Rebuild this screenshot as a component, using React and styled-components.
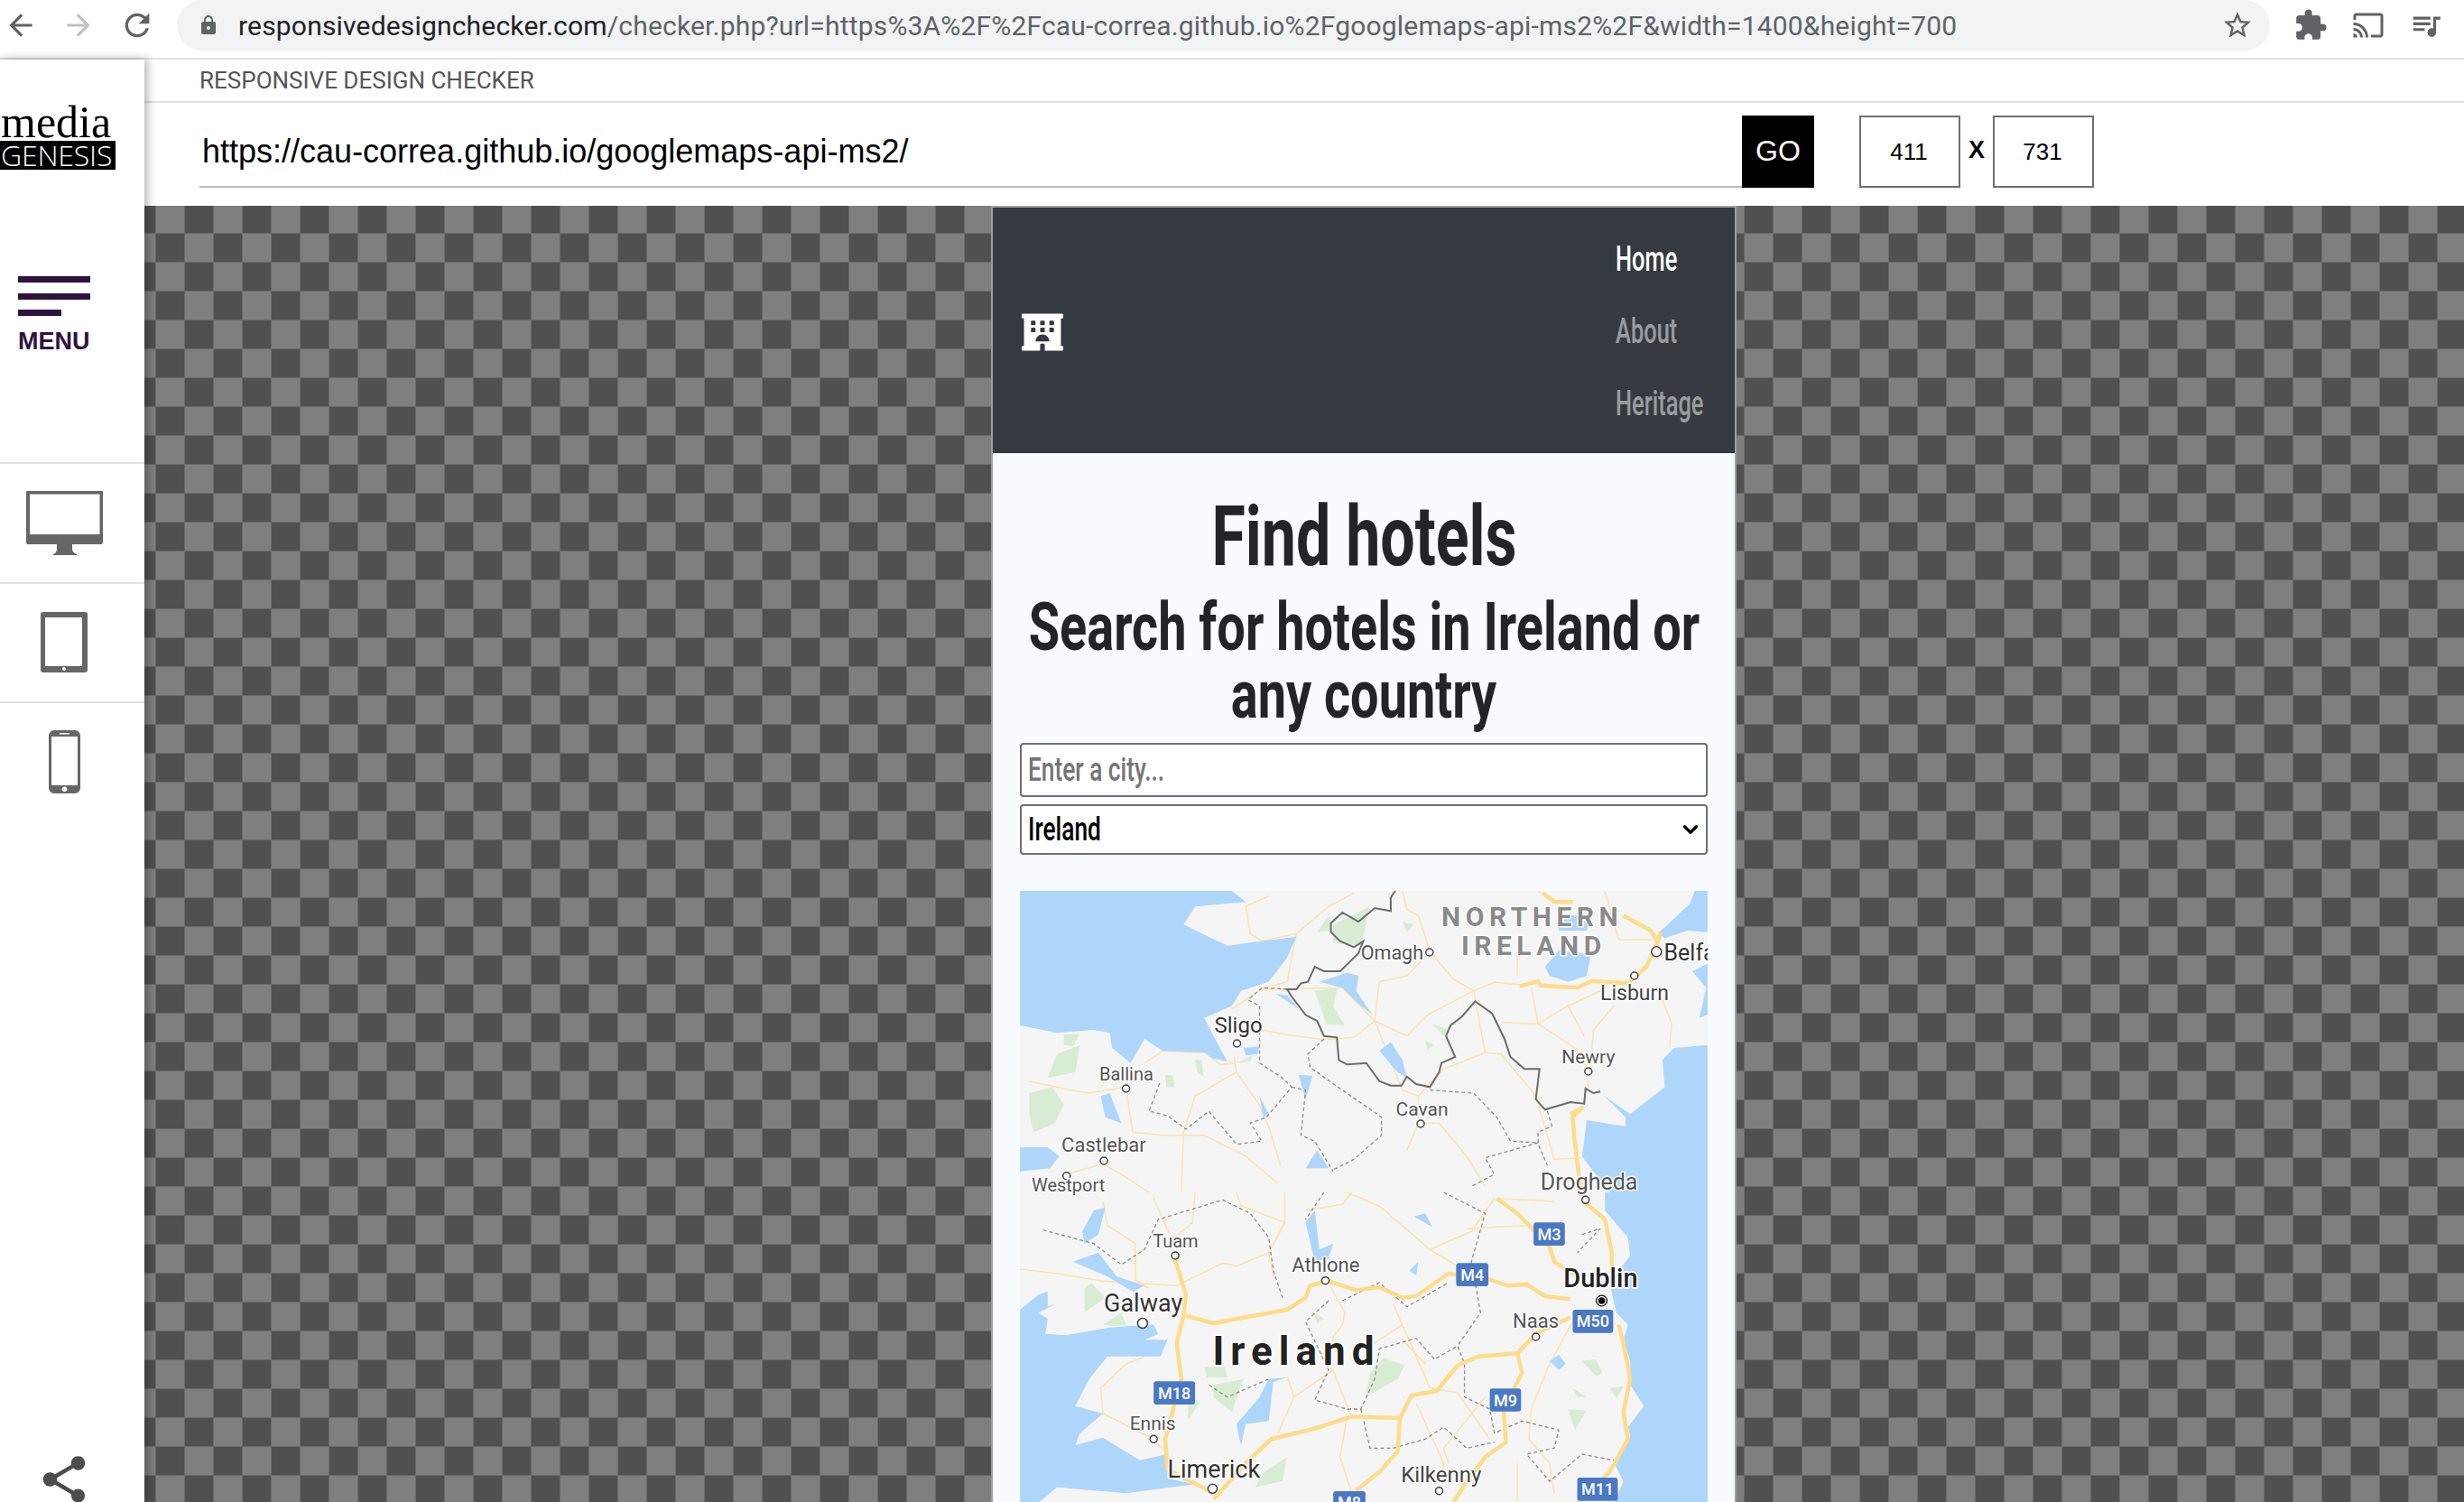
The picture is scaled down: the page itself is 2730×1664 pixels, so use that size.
import React from 'react'
import styled, { createGlobalStyle } from 'styled-components'
import { MdArrowBack, MdArrowForward, MdRefresh, MdLock, MdStarBorder, MdExtension, MdCast, MdQueueMusic, MdShare } from 'react-icons/md'
import { FaHotel } from 'react-icons/fa'
import { ChevronDown } from 'lucide-react'

const Global = createGlobalStyle`
  html, body { margin: 0; padding: 0; background: #fff; }
  body { font-family: "Liberation Sans", Arial, sans-serif; }
`

const Page = styled.div`
  width: 2730px;
  height: 1664px;
  overflow: hidden;
  display: flex;
  flex-direction: column;
`

/* browser toolbar */
const Toolbar = styled.header`
  height: 64px;
  flex: none;
  display: flex;
  align-items: flex-start;
  padding-left: 4px;
  border-bottom: 2px solid #dfe1e5;
  color: #5f6368;
`
const NavIcon = styled.span`
  display: flex;
  margin-top: ${p => p.$top || 9}px;
  margin-right: ${p => p.$gap || 26}px;
  color: ${p => p.$muted ? '#bdc1c6' : '#5f6368'};
`
const Omnibox = styled.div`
  width: 2319px;
  height: 56px;
  margin-left: -2px;
  flex: none;
  display: flex;
  align-items: center;
  padding: 0 18px 0 23px;
  box-sizing: border-box;
  background: #f1f3f4;
  border-radius: 28px;
`
const AddressText = styled.div`
  flex: 1;
  margin-left: 21px;
  font: 400 30px "Roboto", sans-serif;
  letter-spacing: .18px;
  color: #5f6368;
  white-space: nowrap;
  b { font-weight: 400; color: #202124; }
`
const ToolbarRight = styled.div`
  display: flex;
  margin-left: 26px;
`

/* app body */
const Body = styled.div`
  flex: 1;
  display: flex;
  min-height: 0;
`
const Sidebar = styled.aside`
  position: relative;
  z-index: 2;
  width: 160px;
  flex: none;
  display: flex;
  flex-direction: column;
  background: #fff;
  box-shadow: 3px 0 10px rgba(0, 0, 0, .32);
`
const Logo = styled.div`
  height: 184px;
  padding-top: 50px;
  box-sizing: border-box;
  flex: none;
`
const LogoWord = styled.div`
  font: 400 50px/38px "Liberation Serif", serif;
  padding-left: 1px;
  color: #000;
`
const LogoBar = styled.div`
  width: 128px;
  height: 32px;
  margin-top: 2px;
  background: #000;
  color: #fff;
  overflow: hidden;
  font: 300 32px/32px "Open Sans", sans-serif;
  letter-spacing: -.2px;
  padding-left: 1px;
  box-sizing: border-box;
`
const MenuBlock = styled.div`
  height: 262px;
  padding: 56px 0 0 20px;
  box-sizing: border-box;
  flex: none;
`
const MenuLine = styled.div`
  width: ${p => p.$short ? 48 : 80}px;
  height: 7px;
  margin-bottom: 11.5px;
  background: #2e1240;
`
const MenuLabel = styled.div`
  margin-top: 15px;
  font: 700 27px/27px "Liberation Sans", sans-serif;
  color: #2e1240;
`
const DeviceRow = styled.div`
  height: 130.5px;
  flex: none;
  border-top: 2px solid #e0e0e0;
  display: flex;
  align-items: center;
  justify-content: center;
  padding-right: 18px;
  box-sizing: content-box;
  color: #666;
  &:last-of-type { border-bottom: 2px solid #e0e0e0; }
`
const ShareButton = styled.div`
  margin-top: auto;
  padding: 0 0 0 40px;
  display: flex;
  height: 56px;
  color: #4d4d4d;
  svg { flex: none; }
`

const Main = styled.main`
  flex: 1;
  min-width: 0;
  display: flex;
  flex-direction: column;
`
const TitleBar = styled.div`
  height: 46px;
  flex: none;
  display: flex;
  align-items: center;
  padding-left: 61px;
  border-bottom: 2px solid #e0e0e0;
  font: 400 26px "Roboto", sans-serif;
  color: #555;
`
const UrlRow = styled.div`
  height: 114px;
  flex: none;
  padding: 14px 0 20px 61px;
  box-sizing: border-box;
  display: flex;
  align-items: stretch;
`
const UrlField = styled.div`
  width: 1709px;
  box-sizing: border-box;
  padding: 2px 0 0 3px;
  display: flex;
  align-items: center;
  border-bottom: 2px solid #bbb;
  font: 400 36px "Liberation Sans", sans-serif;
  color: #000;
`
const GoButton = styled.div`
  width: 80px;
  display: flex;
  align-items: center;
  justify-content: center;
  padding-bottom: 2px;
  box-sizing: border-box;
  background: #000;
  color: #fff;
  font: 400 32px "Liberation Sans", sans-serif;
`
const SizeBox = styled.div`
  width: 112px;
  margin-left: ${p => p.$first ? 50 : 0}px;
  box-sizing: border-box;
  border: 2px solid #707070;
  display: flex;
  align-items: center;
  justify-content: center;
  padding-right: 2px;
  font: 400 26px "Liberation Sans", sans-serif;
  color: #000;
`
const Times = styled.div`
  width: 36px;
  display: flex;
  align-items: center;
  justify-content: center;
  padding-bottom: 4px;
  font: 700 27px "Liberation Sans", sans-serif;
`
const Stage = styled.div`
  flex: 1;
  min-height: 0;
  padding-left: 938px;
  background-color: #505050;
  background-image:
    linear-gradient(90deg, #6a6a6a 1px, transparent 1px),
    linear-gradient(#6a6a6a 1px, transparent 1px),
    conic-gradient(#7f7f7f 25%, #505050 0 50%, #7f7f7f 0 75%, #505050 0);
  background-size: 32px 32px, 32px 32px, 64px 64px;
  background-position: 12px 30px;
`

/* the page inside the preview */
const Frame = styled.div`
  width: 826px;
  height: 100%;
  box-sizing: border-box;
  border: 2px solid #a0a0a0;
  border-bottom: none;
  background: #f8fbff;
  overflow: hidden;
`
const Navbar = styled.nav`
  height: 272px;
  display: flex;
  justify-content: space-between;
  align-items: center;
  padding: 2px 0 0 32px;
  box-sizing: border-box;
  background: #343a40;
  color: #fff;
  > svg { margin-top: 2px; }
`
const NavList = styled.ul`
  list-style: none;
  margin: 0;
  padding: 0;
  width: 132px;
  display: flex;
  flex-direction: column;
  gap: 40px;
`
const NavItem = styled.li`
  height: 40px;
  color: ${p => p.$active ? '#fff' : 'rgba(255,255,255,.5)'};
  font: 500 38px/40px "Roboto", sans-serif;
  span { display: inline-block; transform: scaleX(.67); transform-origin: left center; white-space: nowrap; }
`
const Content = styled.section`
  padding: 0 30px;
`
const Heading = styled.div`
  display: flex;
  justify-content: center;
  white-space: nowrap;
  color: #212529;
  font-family: "Roboto", sans-serif;
  font-weight: 700;
  font-size: ${p => p.$size}px;
  line-height: ${p => p.$line}px;
  margin-top: ${p => p.$top || 0}px;
  span { display: inline-block; transform: scaleX(${p => p.$squeeze}); }
`
const FieldBox = styled.div`
  height: ${p => p.$height}px;
  margin-top: ${p => p.$top}px;
  box-sizing: border-box;
  display: flex;
  align-items: center;
  justify-content: space-between;
  padding: 0 7px;
  background: #fff;
  border: 2px solid #6f6f6f;
  border-radius: 4px;
  color: ${p => p.$placeholder ? '#757575' : '#000'};
  font: 500 36px "Roboto", sans-serif;
  span { display: inline-block; transform: scaleX(.73); transform-origin: left center; white-space: nowrap; }
  svg { color: #000; margin-right: -3px; }
`
const MapBox = styled.div`
  height: 678px;
  margin-top: 40px;
  overflow: hidden;
  background: #aed6fb;
  svg { display: block; }
`

/* map data, written in the reference crop coordinates */
const A = (x, y) => [x / 1.96 - 10, y / 3 - 6]
const B = (x, y) => [x / 1.96 - 10, y / 3 + 334]
const pts = (zone, list) => {
  const out = []
  for (let i = 0; i < list.length; i += 2) out.push(zone(list[i], list[i + 1]).map(n => n.toFixed(1)).join(','))
  return out.join(' ')
}

const landHoles = [
  [A, [20, 18, 480, 18, 510, 55, 400, 70, 375, 130, 470, 200, 520, 190, 570, 180, 620, 170, 600, 240, 560, 320, 500, 350, 480, 400, 420, 440, 440, 500, 470, 585, 440, 575, 420, 555, 330, 550, 290, 510, 260, 590, 220, 540, 215, 490, 180, 480, 100, 490, 20, 465]],
  [A, [1513, 18, 1485, 18, 1475, 60, 1440, 110, 1405, 160, 1420, 175, 1470, 150, 1513, 155]],
  [A, [1513, 260, 1480, 285, 1510, 340, 1495, 440, 1513, 430]],
  [A, [1513, 530, 1440, 540, 1415, 580, 1420, 670, 1345, 760, 1285, 695, 1335, 770, 1335, 800, 1250, 780, 1245, 850, 1240, 900, 1280, 980, 1300, 1020, 1513, 1020]],
  [A, [20, 870, 80, 870, 105, 900, 85, 940, 20, 950]],
  [A, [1160, 270, 1190, 215, 1260, 230, 1250, 300, 1210, 320, 1170, 300]],
  [A, [1190, 90, 1260, 110, 1250, 150, 1190, 150]],
  [A, [670, 320, 730, 290, 755, 300, 750, 350, 785, 430, 760, 400, 720, 340]],
  [A, [575, 360, 600, 365, 625, 410, 600, 385]],
  [A, [800, 550, 825, 520, 850, 580, 860, 640, 840, 620]],
  [A, [195, 700, 215, 690, 240, 790, 205, 770]],
  [A, [625, 630, 655, 632, 640, 710]],
  [A, [540, 700, 560, 760, 548, 770]],
  [A, [505, 540, 540, 535, 535, 560, 510, 565]],
  [A, [640, 940, 665, 880, 690, 940]],
  [B, [1290, 0, 1290, 60, 1340, 150, 1345, 210, 1300, 300, 1315, 400, 1340, 440, 1330, 490, 1345, 560, 1345, 640, 1375, 710, 1340, 780, 1345, 810, 1310, 900, 1330, 960, 1310, 1032, 1513, 1032, 1513, 0]],
  [B, [20, 390, 60, 340, 80, 330, 80, 380, 100, 370, 60, 400, 80, 420, 75, 470, 120, 475, 210, 450, 290, 440, 310, 440, 320, 470, 290, 490, 340, 490, 325, 545, 210, 545, 170, 620, 140, 710, 200, 735, 150, 800, 140, 840, 200, 815, 280, 890, 340, 870, 340, 950, 400, 970, 250, 1000, 100, 980, 60, 1032, 20, 1032]],
  [B, [135, 230, 190, 200, 230, 280, 290, 310, 265, 330, 210, 280]],
  [B, [155, 130, 180, 60, 205, 50, 190, 140, 160, 170]],
  [B, [490, 770, 540, 680, 560, 620, 600, 615, 570, 630, 560, 760, 510, 770, 500, 840, 495, 810]],
  [B, [640, 100, 660, 60, 670, 190, 700, 170, 690, 220, 660, 230]],
  [B, [875, 80, 900, 70, 915, 115]],
  [B, [865, 260, 885, 230, 880, 275]],
  [B, [1170, 560, 1190, 540, 1205, 570, 1190, 590]],
]
const greens = [
  [A, [665, 155, 690, 100, 695, 150]], [A, [700, 130, 780, 70, 760, 200, 700, 190]], [A, [850, 120, 875, 130, 860, 155]],
  [A, [660, 350, 710, 340, 700, 400, 725, 465, 685, 460]], [A, [915, 460, 950, 480, 940, 500]], [A, [900, 515, 918, 530, 905, 545]],
  [A, [115, 495, 148, 495, 135, 535, 115, 530]], [A, [100, 560, 150, 530, 140, 620, 80, 640]], [A, [40, 690, 90, 670, 115, 730, 95, 790, 50, 820, 40, 760]],
  [A, [400, 580, 415, 580, 418, 635, 405, 620]], [A, [335, 630, 352, 630, 355, 670, 338, 672]], [A, [490, 590, 525, 565, 520, 585]],
  [B, [160, 320, 175, 300, 205, 350, 160, 400]], [B, [200, 440, 240, 400, 250, 440, 220, 445]], [B, [420, 580, 465, 580, 470, 615, 425, 615]],
  [B, [440, 640, 505, 620, 480, 730, 440, 680]], [B, [385, 680, 410, 700, 385, 755]], [B, [780, 600, 810, 550, 855, 575, 840, 620, 770, 680]],
  [B, [1240, 560, 1270, 555, 1285, 600, 1270, 610]], [B, [1220, 650, 1250, 680, 1230, 680]], [B, [1300, 650, 1330, 645, 1315, 685]],
  [B, [1210, 720, 1250, 725, 1225, 790]], [B, [655, 395, 680, 420, 665, 435]], [B, [550, 930, 600, 880, 590, 960, 530, 980]],
]
const thinRoads = [
  [A, [510, 70, 560, 35]], [A, [510, 70, 520, 160, 545, 185, 620, 160, 690, 70, 745, 25]], [A, [620, 160, 600, 320, 550, 340, 480, 410]],
  [A, [850, 18, 860, 80, 885, 100, 910, 220, 960, 310, 1005, 350, 1050, 322, 1110, 330]], [A, [910, 220, 860, 300, 800, 320, 790, 450, 860, 500, 905, 430, 1005, 350]],
  [A, [790, 450, 745, 505, 680, 512, 595, 495, 545, 480]], [A, [545, 345, 720, 340, 790, 450]], [A, [790, 450, 850, 680, 885, 700, 885, 790, 860, 880]],
  [A, [885, 700, 940, 610, 1030, 555, 1065, 560, 1140, 700, 1180, 910]], [A, [1005, 350, 1030, 555]], [A, [1065, 455, 1145, 460, 1210, 400, 1280, 350]],
  [A, [1130, 340, 1145, 460, 1245, 560, 1255, 680]], [A, [1210, 400, 1245, 500]], [A, [1310, 400, 1265, 480, 1260, 600]], [A, [1410, 360, 1435, 460, 1430, 540]],
  [A, [485, 570, 490, 620, 540, 730, 560, 800, 585, 930]], [A, [490, 620, 400, 700, 375, 820, 370, 1020]], [A, [485, 590, 455, 595, 420, 555, 330, 550, 290, 590]],
  [A, [250, 680, 265, 820, 330, 830, 420, 830, 510, 900, 580, 990]], [A, [40, 650, 130, 680, 170, 690, 250, 670]], [A, [120, 960, 200, 925, 250, 970, 300, 1020]],
  [A, [890, 790, 930, 790, 990, 900, 1030, 1000]], [A, [1180, 910, 1240, 905]], [A, [1145, 20, 1190, 55]], [A, [1290, 20, 1320, 180, 1400, 180]], [A, [1100, 200, 1100, 300]],
  [B, [20, 255, 100, 270, 200, 295, 260, 300, 360, 310, 460, 235, 490, 245, 560, 200, 595, 100, 500, 45, 490, 0]], [B, [595, 100, 560, 200, 570, 280]], [B, [400, 0, 395, 100, 340, 170]],
  [B, [310, 20, 345, 140]], [B, [200, 30, 210, 110, 270, 170, 270, 290, 300, 320]], [B, [595, 100, 595, 0]], [B, [640, 60, 720, 40, 740, 0]], [B, [800, 45, 730, 0]], [B, [800, 45, 910, 190, 965, 240]],
  [B, [910, 190, 1000, 130, 1050, 20]], [B, [990, 120, 1120, 110]], [B, [830, 370, 850, 440, 910, 650, 970, 665, 1040, 820]], [B, [850, 440, 780, 510]], [B, [850, 490, 900, 570]],
  [B, [200, 735, 140, 760, 80, 960]], [B, [200, 735, 310, 820, 340, 870]], [B, [200, 735, 195, 650, 250, 570, 300, 540]], [B, [615, 680, 700, 590, 730, 710, 740, 745]], [B, [600, 610, 615, 680, 580, 800]],
  [B, [730, 745, 715, 880, 740, 1000]], [B, [720, 440, 700, 480, 695, 590]], [B, [690, 300, 725, 400, 720, 440]], [B, [880, 700, 940, 900, 930, 980]], [B, [1030, 680, 940, 850, 950, 900]],
  [B, [1130, 720, 1125, 820, 1170, 900, 1180, 1000]], [B, [1060, 20, 1180, 30]], [B, [1100, 900, 1100, 1030]], [B, [1220, 430, 1170, 570, 1130, 720]],
]
const motorways = [
  [A, [1105, 335, 1145, 318, 1150, 332, 1230, 340, 1260, 318, 1340, 325, 1380, 270, 1405, 190, 1410, 155]], [A, [1330, 100, 1390, 150, 1405, 190]], [A, [1155, 25, 1180, 55, 1220, 55]],
  [A, [1215, 760, 1240, 740, 1220, 770, 1225, 860, 1235, 980, 1245, 1020]],
  [B, [1240, 25, 1290, 90, 1305, 200, 1305, 250]], [B, [1055, 20, 1100, 70, 1170, 180, 1180, 230, 1240, 290]],
  [B, [380, 410, 440, 435, 510, 415, 600, 390, 640, 350, 650, 310, 690, 295, 750, 325, 800, 315, 850, 350, 880, 345, 950, 270, 1040, 290, 1080, 310, 1120, 305, 1160, 345, 1215, 355]],
  [B, [355, 215, 380, 340, 375, 410, 360, 500, 370, 620, 335, 820, 340, 920, 440, 1000]],
  [B, [1215, 415, 1140, 470, 1100, 535, 1015, 545, 970, 575, 925, 660, 870, 675, 845, 750, 740, 745, 660, 785, 565, 820, 510, 900, 440, 1020]],
  [B, [845, 750, 840, 860, 800, 930, 750, 990]], [B, [1100, 535, 1110, 600, 1070, 720, 1075, 830, 1030, 880, 990, 960, 960, 1032]],
  [B, [1230, 1032, 1300, 930, 1340, 820, 1330, 730, 1345, 620, 1330, 500, 1320, 440]],
]
const countyLines = [
  [A, [600, 345, 545, 340, 515, 380, 540, 400, 540, 590, 590, 640, 610, 670, 555, 770, 520, 790, 545, 850, 490, 860, 430, 750, 380, 810, 340, 765, 300, 750, 325, 650]],
  [A, [680, 510, 645, 560, 650, 605, 720, 680, 805, 770, 805, 830, 745, 910, 700, 945]], [A, [610, 670, 640, 680, 630, 830, 660, 850, 700, 950]],
  [A, [910, 680, 1005, 690, 1055, 770, 1085, 850, 1145, 855, 1030, 905, 1050, 960, 1000, 1000]], [A, [1165, 750, 1175, 800, 1145, 820, 1145, 860, 1165, 930]],
  [B, [70, 125, 180, 170, 240, 240, 290, 190, 320, 90, 460, 25, 520, 70, 560, 150, 570, 260, 590, 350]], [B, [680, 0, 640, 90]],
  [B, [690, 360, 640, 430, 690, 590, 660, 690, 730, 720, 760, 720, 790, 620, 800, 520, 880, 485, 920, 555, 970, 510, 985, 570, 985, 680, 1040, 720, 1050, 800, 1110, 760, 1190, 790, 1180, 850, 1120, 870, 1170, 960, 1240, 870, 1310, 890]],
  [B, [940, 0, 1030, 70, 1000, 230, 1020, 400, 970, 510]], [B, [720, 360, 800, 300, 860, 380, 950, 300]], [B, [1240, 140, 1280, 120, 1230, 200]], [B, [430, 640, 470, 680, 560, 620]],
  [B, [760, 720, 780, 850, 830, 850, 900, 820, 940, 780, 990, 850, 1050, 830]],
]
const border = [835, 18, 825, 40, 825, 85, 790, 75, 755, 120, 720, 90, 695, 125, 695, 155, 715, 185, 745, 205, 765, 185, 755, 225, 715, 285, 680, 285, 660, 270, 645, 320, 630, 325, 620, 345, 600, 345, 610, 370, 640, 430, 665, 450, 680, 500, 708, 505, 712, 580, 730, 595, 772, 590, 800, 650, 825, 665, 848, 665, 860, 635, 880, 660, 910, 670, 930, 620, 935, 590, 965, 570, 945, 500, 955, 465, 980, 435, 1008, 385, 1045, 425, 1072, 510, 1085, 570, 1115, 610, 1148, 610, 1140, 710, 1160, 745, 1215, 720, 1245, 725, 1248, 675, 1265, 690, 1280, 685]

const towns = [
  [A, 909, 222], [A, 1402, 220, 5.5], [A, 1354, 300], [A, 491, 525], [A, 250, 675], [A, 1254, 618], [A, 890, 792], [A, 202, 915], [A, 121, 965],
  [B, 1248, 25], [B, 357, 210], [B, 683, 293], [B, 286, 435, 5.5], [B, 1140, 480], [B, 310, 820], [B, 438, 985, 5], [B, 930, 992],
]
const labels = [
  [A, 'Omagh', 760, 245, 21.5], [A, 'Sligo', 442, 490, 24, '#333'], [A, 'Ballina', 192, 648, 20], [A, 'Newry', 1196, 590, 21], [A, 'Lisburn', 1280, 382, 23, '#444'],
  [A, 'Cavan', 836, 766, 21], [A, 'Castlebar', 110, 885, 22], [A, 'Westport', 45, 1018, 20], [A, 'Drogheda', 1150, 1010, 25], [A, 'Belfast', 1418, 248, 25, '#333'],
  [B, 'Tuam', 308, 183, 20], [B, 'Athlone', 610, 265, 22], [B, 'Galway', 202, 395, 27, '#333'], [B, 'Naas', 1090, 450, 22], [B, 'Ennis', 258, 790, 21],
  [B, 'Limerick', 340, 948, 27, '#333'], [B, 'Kilkenny', 847, 962, 24, '#444'],
]
const shields = [
  ['M3', 1135, 100, 1203, 177], ['M4', 967, 235, 1037, 312], ['M50', 1220, 390, 1308, 467], ['M18', 310, 628, 400, 705], ['M9', 1040, 652, 1108, 728], ['M8', 700, 993, 770, 1070], ['M11', 1230, 948, 1318, 1025],
]

const HALO = { paintOrder: 'stroke', stroke: '#fff', strokeLinejoin: 'round', fontFamily: 'Roboto, sans-serif' }

const HotelMap = () => (
  <svg width="762" height="678" viewBox="0 0 762 678">
    <rect width="762" height="678" fill="#f5f5f5" />
    {greens.map(([z, p], i) => <polygon key={i} points={pts(z, p)} fill="#d8ecd3" />)}
    {thinRoads.map(([z, p], i) => <polyline key={i} points={pts(z, p)} fill="none" stroke="#fbe3ab" strokeWidth="1.5" />)}
    {landHoles.map(([z, p], i) => <polygon key={i} points={pts(z, p)} fill="#aed6fb" />)}
    {countyLines.map(([z, p], i) => <polyline key={i} points={pts(z, p)} fill="none" stroke="#8c8c8c" strokeWidth="1.3" strokeDasharray="4 3" />)}
    <polyline points={pts(A, border)} fill="none" stroke="#6b6b6b" strokeWidth="2" />
    {motorways.map(([z, p], i) => <polyline key={i} points={pts(z, p)} fill="none" stroke="#fddc8a" strokeWidth="4.5" strokeLinejoin="round" />)}
    {towns.map(([z, x, y, r], i) => {
      const [cx, cy] = z(x, y)
      return <circle key={i} cx={cx} cy={cy} r={r || 4} fill="#fff" stroke="#444" strokeWidth="1.5" />
    })}
    <circle cx={B(1283, 360)[0]} cy={B(1283, 360)[1]} r="6" fill="#000" stroke="#000" />
    <circle cx={B(1283, 360)[0]} cy={B(1283, 360)[1]} r="4.5" fill="none" stroke="#fff" strokeWidth="1.5" />
    {labels.map(([z, t, x, y, size, fill]) => {
      const [tx, ty] = z(x, y)
      return <text key={t} x={tx} y={ty} fontSize={size} fill={fill || '#555'} strokeWidth="3" style={HALO}>{t}</text>
    })}
    <text x={B(1200, 315)[0]} y={B(1200, 315)[1]} fontSize="29" fontWeight="500" fill="#222" strokeWidth="3.5" style={HALO}>Dublin</text>
    <text x={B(438, 572)[0]} y={B(438, 572)[1]} fontSize="44" fontWeight="700" letterSpacing="7" fill="#222" strokeWidth="4" style={HALO}>Ireland</text>
    <text x={A(935, 135)[0]} y={A(935, 135)[1]} fontSize="30" fontWeight="700" letterSpacing="5.500" fill="#8a8a8a" strokeWidth="3" style={HALO}>NORTHERN</text>
    <text x={A(978, 232)[0]} y={A(978, 232)[1]} fontSize="30" fontWeight="700" letterSpacing="5.500" fill="#8a8a8a" strokeWidth="3" style={HALO}>IRELAND</text>
    {shields.map(([t, x1, y1, x2, y2]) => {
      const [ax, ay] = B(x1, y1)
      const [bx, by] = B(x2, y2)
      return (
        <g key={t}>
          <rect x={ax} y={ay} width={bx - ax} height={by - ay} rx="3" fill="#4a78c4" />
          <text x={(ax + bx) / 2} y={(ay + by) / 2 + 6.5} textAnchor="middle" fontSize="18" fontWeight="500" fill="#fff" fontFamily="Roboto, sans-serif">{t}</text>
        </g>
      )
    })}
  </svg>
)

const MonitorIcon = () => (
  <svg width="85" height="71" viewBox="0 0 85 71" fill="currentColor">
    <path fillRule="evenodd" d="M1 0h83a1 1 0 0 1 1 1v56a2 2 0 0 1-2 2H2a2 2 0 0 1-2-2V1a1 1 0 0 1 1-1zM4 3.500V48h77.500V3.500z" />
    <path d="M34 59h17v5c0 3 2 5 5 6v1H30v-1c3-1 4-3 4-6z" />
  </svg>
)
const TabletIcon = () => (
  <svg width="52" height="67" viewBox="0 0 52 67" fill="currentColor">
    <path fillRule="evenodd" d="M3 0h46a3 3 0 0 1 3 3v61a3 3 0 0 1-3 3H3a3 3 0 0 1-3-3V3a3 3 0 0 1 3-3zM5 6v54h41V6zM26 61a2 2 0 1 0 .01 0z" />
  </svg>
)
const PhoneIcon = () => (
  <svg width="35" height="70" viewBox="0 0 35 70" fill="currentColor">
    <path fillRule="evenodd" d="M6 0h23a6 6 0 0 1 6 6v58a6 6 0 0 1-6 6H6a6 6 0 0 1-6-6V6a6 6 0 0 1 6-6zM3 7v54h29V7zM12 3v1.500h11V3zM17.500 62.500a3 2.800 0 1 0 .01 0z" />
  </svg>
)

export default function App() {
  return (
    <Page>
      <Global />
      <Toolbar>
        <NavIcon><MdArrowBack size={38} /></NavIcon>
        <NavIcon $muted><MdArrowForward size={38} /></NavIcon>
        <NavIcon $top={8}><MdRefresh size={40} /></NavIcon>
        <Omnibox>
          <MdLock size={24} />
          <AddressText><b>responsivedesignchecker.com</b>/checker.php?url=https%3A%2F%2Fcau-correa.github.io%2Fgooglemaps-api-ms2%2F&amp;width=1400&amp;height=700</AddressText>
          <MdStarBorder size={36} />
        </Omnibox>
        <ToolbarRight>
          <NavIcon $gap={27}><MdExtension size={38} /></NavIcon>
          <NavIcon $gap={27} $top={10}><MdCast size={36} /></NavIcon>
          <NavIcon $gap={0}><MdQueueMusic size={38} /></NavIcon>
        </ToolbarRight>
      </Toolbar>
      <Body>
        <Sidebar>
          <Logo>
            <LogoWord>media</LogoWord>
            <LogoBar>GENESIS</LogoBar>
          </Logo>
          <MenuBlock>
            <MenuLine />
            <MenuLine />
            <MenuLine $short />
            <MenuLabel>MENU</MenuLabel>
          </MenuBlock>
          <DeviceRow><MonitorIcon /></DeviceRow>
          <DeviceRow><TabletIcon /></DeviceRow>
          <DeviceRow><PhoneIcon /></DeviceRow>
          <ShareButton><MdShare size={62} /></ShareButton>
        </Sidebar>
        <Main>
          <TitleBar>RESPONSIVE DESIGN CHECKER</TitleBar>
          <UrlRow>
            <UrlField>https://cau-correa.github.io/googlemaps-api-ms2/</UrlField>
            <GoButton>GO</GoButton>
            <SizeBox $first>411</SizeBox>
            <Times>X</Times>
            <SizeBox>731</SizeBox>
          </UrlRow>
          <Stage>
            <Frame>
              <Navbar>
                <FaHotel size={46} />
                <NavList>
                  <NavItem $active><span>Home</span></NavItem>
                  <NavItem><span>About</span></NavItem>
                  <NavItem><span>Heritage</span></NavItem>
                </NavList>
              </Navbar>
              <Content>
                <Heading $size={92} $line={96} $top={45} $squeeze={0.74}><span>Find hotels</span></Heading>
                <Heading $size={74} $line={75} $top={14} $squeeze={0.755}><span>Search for hotels in Ireland or</span></Heading>
                <Heading $size={74} $line={75} $squeeze={0.755}><span>any country</span></Heading>
                <FieldBox $height={60} $top={16} $placeholder><span>Enter a city...</span></FieldBox>
                <FieldBox $height={56} $top={8}><span>Ireland</span><ChevronDown size={26} strokeWidth={3} /></FieldBox>
                <MapBox><HotelMap /></MapBox>
              </Content>
            </Frame>
          </Stage>
        </Main>
      </Body>
    </Page>
  )
}
